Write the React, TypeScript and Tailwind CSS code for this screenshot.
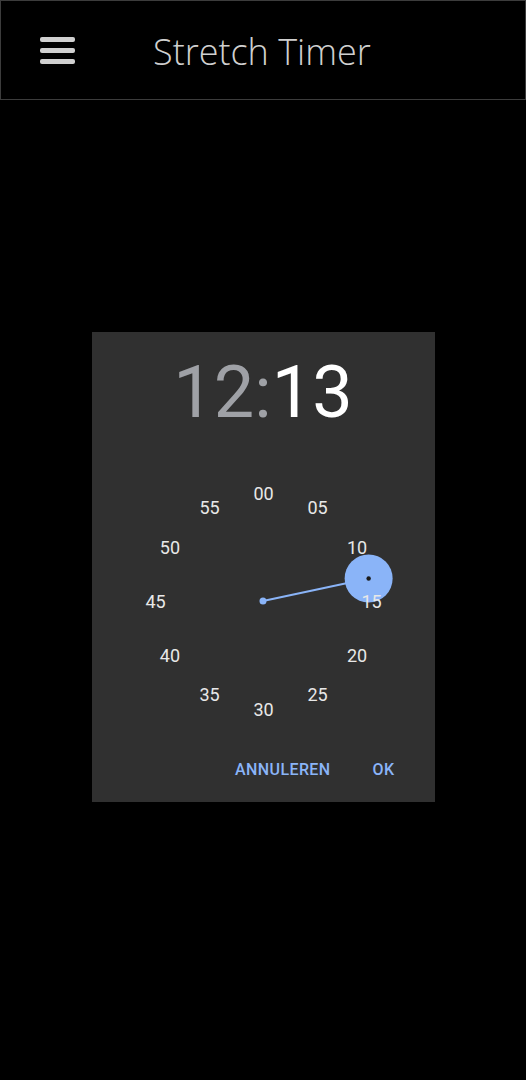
import React from 'react';

const minutes = ['00', '05', '10', '15', '20', '25', '30', '35', '40', '45', '50', '55'];

// clock face: 260px box, numerals on a 108px radius
const SIZE = 260;
const C = SIZE / 2;
const R = 108;

function ClockFace({ value }: { value: number }) {
    const a = (value / 60) * Math.PI * 2;
    const hx = C + R * Math.sin(a);
    const hy = C - R * Math.cos(a);
    return (
        <div className="relative mx-auto h-[260px] w-[260px]">
            <svg className="absolute inset-0" width={SIZE} height={SIZE}>
                <line x1={C} y1={C} x2={hx} y2={hy} stroke="#8ab4f8" strokeWidth={2} />
                <circle cx={C} cy={C} r={3.5} fill="#8ab4f8" />
                <circle cx={hx} cy={hy} r={24} fill="#8ab4f8" />
                <circle cx={hx} cy={hy} r={2.2} fill="#1a1a1a" />
            </svg>
            {minutes.map((m, i) => {
                const t = (i / 12) * Math.PI * 2;
                return (
                    <span
                        key={m}
                        className="absolute -translate-x-1/2 -translate-y-1/2 text-[18px] leading-none text-[#e8e8e8]"
                        style={{ left: C + 0.5 + R * Math.sin(t), top: C + 0.5 - R * Math.cos(t) }}
                    >
                        {m}
                    </span>
                );
            })}
        </div>
    );
}

export default function App() {
    return (
        <div className="min-h-[1080px] w-full bg-black" style={{ fontFamily: 'Roboto, "Noto Sans", sans-serif' }}>
            {/* Barre du haut */}
            <header className="flex h-[100px] items-center border border-[#3c3c3c]">
                <div className="ml-[39px] flex w-[35px] flex-col gap-[6px]">
                    <span className="h-[5px] rounded-[2px] bg-[#d0d0d0]" />
                    <span className="h-[5px] rounded-[2px] bg-[#d0d0d0]" />
                    <span className="h-[5px] rounded-[2px] bg-[#d0d0d0]" />
                </div>
                <h1
                    className="ml-[78px] mt-[3px] text-[36px] font-light leading-none text-[#d0d0d0]"
                    style={{ fontFamily: '"Open Sans", "Noto Sans", sans-serif' }}
                >
                    Stretch Timer
                </h1>
            </header>

            {/* Dialoog */}
            <div className="pt-[232px]">
                <div className="mx-auto w-[343px] bg-[#303030] shadow-lg">
                    <div className="h-[139px] pt-[25px] text-center text-[72px] leading-none">
                        <span className="text-[#9fa1a6]">12:</span>
                        <span className="text-white">13</span>
                    </div>
                    <ClockFace value={13} />
                    <div className="flex h-[71px] items-start justify-end gap-[22px] pr-[28px] pt-[31px] text-[16px] font-medium leading-none tracking-wide text-[#8ab4f8]">
                        <button className="px-2 py-0">ANNULEREN</button>
                        <button className="px-3 py-0">OK</button>
                    </div>
                </div>
            </div>
        </div>
    );
}
